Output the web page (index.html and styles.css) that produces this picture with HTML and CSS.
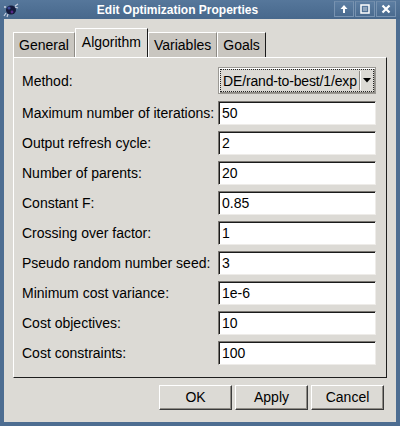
FILE: index.html
```html
<!DOCTYPE html>
<html>
<head>
<meta charset="utf-8">
<title>Edit Optimization Properties</title>
<link rel="stylesheet" href="styles.css">
</head>
<body>
<div class="window">
  <div class="titlebar">
    <svg class="app-icon" width="16" height="16" viewBox="0 0 16 16">
      <ellipse cx="8" cy="8" rx="5" ry="4.5" fill="#151a3a"/>
      <circle cx="6" cy="6" r="1.6" fill="#3a4a9a"/>
      <circle cx="9" cy="10" r="1.4" fill="#5a2a8a"/>
      <path d="M12 4 L15 2 M12 5 L15 6 M3 11 L1 14 M5 12 L4 15" stroke="#c8d0e0" stroke-width="1.2"/>
      <circle cx="2" cy="5" r="1" fill="#c8d0e0"/>
    </svg>
    <div class="title">Edit Optimization Properties</div>
    <div class="tb-buttons">
      <div class="tb-btn">
        <svg width="10" height="10" viewBox="0 0 10 10"><path d="M5 1 L1.5 5 H4 V9 H6 V5 H8.5 Z" fill="#fff"/></svg>
      </div>
      <div class="tb-btn">
        <svg width="10" height="10" viewBox="0 0 10 10"><rect x="1" y="1" width="8" height="8" fill="none" stroke="#fff" stroke-width="1.5"/><rect x="3" y="3" width="4" height="4" fill="#fff" opacity="0.35"/></svg>
      </div>
      <div class="tb-btn">
        <svg width="10" height="10" viewBox="0 0 10 10"><path d="M1.5 1.5 L8.5 8.5 M8.5 1.5 L1.5 8.5" stroke="#fff" stroke-width="2.2"/></svg>
      </div>
    </div>
  </div>
  <div class="client">
    <div class="tabs">
      <div class="tab">General</div>
      <div class="tab active">Algorithm</div>
      <div class="tab">Variables</div>
      <div class="tab last">Goals</div>
    </div>
    <div class="panel">
      <div class="form">
        <div class="label">Method:</div>
        <div class="combo">
          <span class="combo-text">DE/rand-to-best/1/exp</span>
          <span class="combo-arrow"><svg width="8" height="5" viewBox="0 0 8 5"><path d="M0 0 H8 L4 4.5 Z" fill="#000"/></svg></span>
        </div>
        <div class="label">Maximum number of iterations:</div>
        <div class="input">50</div>
        <div class="label">Output refresh cycle:</div>
        <div class="input">2</div>
        <div class="label">Number of parents:</div>
        <div class="input">20</div>
        <div class="label">Constant F:</div>
        <div class="input">0.85</div>
        <div class="label">Crossing over factor:</div>
        <div class="input">1</div>
        <div class="label">Pseudo random number seed:</div>
        <div class="input">3</div>
        <div class="label">Minimum cost variance:</div>
        <div class="input">1e-6</div>
        <div class="label">Cost objectives:</div>
        <div class="input">10</div>
        <div class="label">Cost constraints:</div>
        <div class="input">100</div>
      </div>
    </div>
    <div class="buttons">
      <div class="btn">OK</div>
      <div class="btn">Apply</div>
      <div class="btn">Cancel</div>
    </div>
  </div>
</div>
</body>
</html>
```
FILE: styles.css
```css
html, body {
  margin: 0;
  padding: 0;
}
body {
  width: 400px;
  height: 426px;
  overflow: hidden;
  font-family: "Liberation Sans", Arial, sans-serif;
  font-size: 14px;
  color: #000;
}
.window {
  width: 400px;
  height: 426px;
  box-sizing: border-box;
  background: #4d6d91;
  display: flex;
  flex-direction: column;
}
.titlebar {
  height: 19px;
  display: flex;
  align-items: center;
  background: linear-gradient(#56779b, #47688c);
}
.app-icon {
  margin-left: 3px;
  flex: none;
}
.title {
  flex: 1;
  text-align: center;
  color: #fff;
  font-weight: bold;
  font-size: 12px;
  padding-left: 2px;
  padding-top: 1px;
}
.tb-buttons {
  display: flex;
  gap: 1px;
  margin-right: 4px;
  align-self: flex-start;
  margin-top: 1px;
}
.tb-btn {
  width: 18px;
  height: 14px;
  border: 1px solid #7893b1;
  border-top-color: #6e8aa9;
  background: linear-gradient(#5d7ea2, #4a6b8f);
  display: flex;
  align-items: center;
  justify-content: center;
}
.client {
  flex: 1;
  margin: 0 4px 4px 4px;
  background: #dcdad5;
  padding: 9px 9px 0 9px;
  display: flex;
  flex-direction: column;
}
.tabs {
  display: flex;
  align-items: flex-end;
  height: 29px;
}
.tab {
  height: 25px;
  box-sizing: border-box;
  padding: 0 5px;
  line-height: 24px;
  background: #c9c6c0;
  border-top: 1px solid #fff;
  border-left: 1px solid #fff;
  border-right: 1px solid #8e8b85;
}
.tab.active {
  height: 29px;
  line-height: 26px;
  padding: 0 6px;
  background: #dcdad5;
  border-right: 1px solid #1a1a1a;
}
.tab.last {
  border-right: 1px solid #1a1a1a;
}
.panel {
  height: 321px;
  box-sizing: border-box;
  border-top: 1px solid #fff;
  border-left: 1px solid #fff;
  border-right: 1px solid #1e1e1e;
  border-bottom: 1px solid #1e1e1e;
  padding: 9px 9px 0 8px;
}
.form {
  display: grid;
  grid-template-columns: 196px 158px;
  grid-template-rows: 28px repeat(9, 24px);
  row-gap: 6px;
}
.label {
  align-self: center;
  white-space: nowrap;
}
.combo {
  height: 27px;
  box-sizing: border-box;
  border: 1px solid #9a9893;
  background: #dcdad5;
  box-shadow: inset 1px 1px 0 #fff, inset -1px -1px 0 #8e8b85;
  outline: 1px dotted #222;
  outline-offset: -3px;
  display: flex;
  align-items: center;
}
.combo-text {
  flex: 1;
  min-width: 0;
  padding-left: 4px;
  white-space: nowrap;
  letter-spacing: -0.15px;
}
.combo-arrow {
  flex: none;
  width: 14px;
  height: 19px;
  border-left: 1px solid #8e8b85;
  box-shadow: inset 1px 0 0 #fff;
  display: flex;
  align-items: center;
  justify-content: center;
  margin-right: 1px;
}
.input {
  height: 24px;
  box-sizing: border-box;
  background: #fff;
  border: 1px solid;
  border-color: #7a7772 #eeece9 #eeece9 #7a7772;
  box-shadow: inset 1px 1px 0 #1a1a1a;
  padding: 0 0 0 3px;
  line-height: 23px;
}
.buttons {
  display: flex;
  justify-content: flex-end;
  gap: 3px;
  margin-top: 7px;
  margin-right: 3px;
}
.btn {
  width: 73px;
  height: 25px;
  box-sizing: border-box;
  background: #dcdad5;
  border: 1px solid;
  border-color: #fff #3a3a3a #3a3a3a #fff;
  box-shadow: inset -1px -1px 0 #8e8b85;
  text-align: center;
  line-height: 23px;
}
```
